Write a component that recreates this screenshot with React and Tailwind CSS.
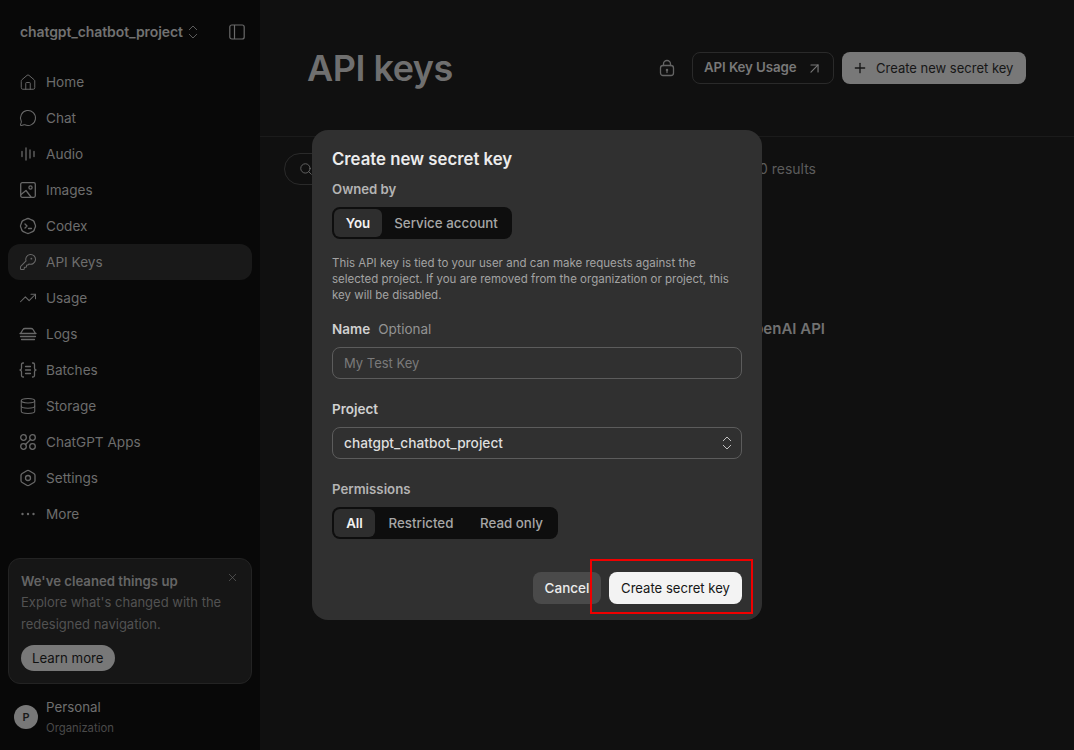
import { ArrowUpRight, ChevronsUpDown, Database, House, KeyRound, MessageCircle, Plus, Search, TrendingUp, X } from 'lucide-react';

const font = { fontFamily: 'Inter, "Liberation Sans", sans-serif' };

const Svg = ({ children }) => (
  <svg width="18" height="18" viewBox="0 0 18 18" fill="none" stroke="currentColor" strokeWidth="1.3" strokeLinecap="round" strokeLinejoin="round">
    {children}
  </svg>
);

const AudioIcon = () => (
  <Svg>
    <path d="M3 6.500v5M7 3v12M11 5v8M15 6.500v5" />
  </Svg>
);

const ImagesIcon = () => (
  <Svg>
    <rect x="1.700" y="1.700" width="14.600" height="14.600" rx="1.500" />
    <circle cx="11.500" cy="6.500" r="1.600" />
    <path d="M2 13.500 7 9.500l5 6.500" />
  </Svg>
);

const CodexIcon = () => (
  <Svg>
    <path d="M9 1.500c1.500 0 2.300 1 3.500 1.300 1.700.4 2.800 1.400 3 3 .2 1.200 1 2 1 3.200s-.8 2-1 3.200c-.2 1.600-1.300 2.600-3 3-1.200.3-2 1.300-3.500 1.300s-2.300-1-3.500-1.300c-1.700-.4-2.800-1.400-3-3C2.300 11 1.500 10.200 1.500 9s.8-2 1-3.200c.2-1.600 1.300-2.600 3-3C6.700 2.500 7.500 1.500 9 1.500Z" />
    <path d="m6 7 2 2-2 2M9.500 11.500h3" />
  </Svg>
);

const LogsIcon = () => (
  <Svg>
    <path d="M1.500 8.500 4 4.500C4.500 3.700 5 3.500 6 3.500h6c1 0 1.500.2 2 1l2.500 4M1 8.500h16M1.500 11.500h15M2.500 14.500h13" />
  </Svg>
);

const BatchesIcon = () => (
  <Svg>
    <path d="M4.500 2H4C3 2 2.500 2.700 2.500 3.500v3.500c0 1-.7 2-1.500 2 .8 0 1.500 1 1.500 2v3.500c0 .8.500 1.500 1.500 1.500h.5M13.500 2h.5c1 0 1.500.7 1.500 1.500v3.500c0 1 .7 2 1.500 2-.8 0-1.500 1-1.500 2v3.500c0 .8-.5 1.500-1.500 1.500h-.5M6.500 5.500h5M6.500 9h5M6.500 12.500h5" />
  </Svg>
);

const AppsIcon = () => (
  <Svg>
    <circle cx="4.500" cy="4.500" r="2.800" />
    <circle cx="13.500" cy="4.500" r="2.800" />
    <circle cx="4.500" cy="13.500" r="2.800" />
    <circle cx="13.500" cy="13.500" r="2.800" />
    <path d="m11.500 6.500-5 5" />
  </Svg>
);

const SettingsIcon = () => (
  <Svg>
    <path d="M7.800 1.800a2.400 2.400 0 0 1 2.400 0l4.600 2.700a2.400 2.400 0 0 1 1.200 2.100v4.800a2.400 2.400 0 0 1-1.200 2.100l-4.600 2.700a2.400 2.400 0 0 1-2.400 0l-4.600-2.700a2.400 2.400 0 0 1-1.200-2.100V6.600a2.400 2.400 0 0 1 1.200-2.100Z" />
    <circle cx="9" cy="9" r="2.500" />
  </Svg>
);

const MoreIcon = () => (
  <svg width="18" height="18" viewBox="0 0 18 18" fill="currentColor">
    <circle cx="3.500" cy="9" r="1.200" />
    <circle cx="9" cy="9" r="1.200" />
    <circle cx="14.500" cy="9" r="1.200" />
  </svg>
);

const LockIcon = () => (
  <svg width="16" height="18" viewBox="0 0 16 18" fill="none" stroke="currentColor" strokeWidth="1.3" strokeLinecap="round">
    <rect x="1.500" y="6.500" width="13" height="10" rx="2.500" />
    <path d="M4.500 6.500V5a3.500 3.500 0 0 1 7 0v1.500M8 11v2.500" />
    <circle cx="8" cy="11" r=".6" fill="currentColor" />
  </svg>
);

const navItems = [
  { label: 'Home', icon: <House size={21} strokeWidth={1.3} /> },
  { label: 'Chat', icon: <MessageCircle size={20} strokeWidth={1.4} /> },
  { label: 'Audio', icon: <AudioIcon /> },
  { label: 'Images', icon: <ImagesIcon /> },
  { label: 'Codex', icon: <CodexIcon /> },
  { label: 'API Keys', icon: <KeyRound size={20} strokeWidth={1.4} />, active: true },
  { label: 'Usage', icon: <TrendingUp size={20} strokeWidth={1.4} /> },
  { label: 'Logs', icon: <LogsIcon /> },
  { label: 'Batches', icon: <BatchesIcon /> },
  { label: 'Storage', icon: <Database size={20} strokeWidth={1.4} /> },
  { label: 'ChatGPT Apps', icon: <AppsIcon /> },
  { label: 'Settings', icon: <SettingsIcon /> },
  { label: 'More', icon: <MoreIcon /> },
];

function Sidebar() {
  return (
    <aside className="w-[260px] shrink-0 h-full bg-[#080808] flex flex-col px-2">
      <div className="h-16 flex items-center pl-3 pr-[7px] shrink-0">
        <span className="text-[14px] pb-[1px] font-semibold text-[#717171] tracking-[-0.1px]">chatgpt_chatbot_project</span>
        <ChevronsUpDown size={18} strokeWidth={1.3} className="text-[#5e5e5e] ml-[1px]" />
        <svg className="ml-auto text-[#6a6a6a]" width="16" height="16" viewBox="0 0 16 16" fill="none" stroke="currentColor" strokeWidth="1.2">
          <rect x=".8" y="1" width="14.400" height="14" rx="2" />
          <path d="M5.500 1v14" />
        </svg>
      </div>
      <nav className="flex flex-col">
        {navItems.map((item) => (
          <div key={item.label} className={`h-9 flex items-center pl-[11px] gap-[9px] rounded-xl text-[13.600px] text-[#6d6d6d] ${item.active ? 'bg-[#191919]' : ''}`}>
            <span className="w-[18px] h-[18px] flex items-center justify-center text-[#686868]">{item.icon}</span>
            <span>{item.label}</span>
          </div>
        ))}
      </nav>
      <div className="mt-auto relative h-[126px] shrink-0 rounded-xl border border-[#232323] bg-[#161616] pt-[12px] pl-3 pr-3">
        <X size={13} strokeWidth={1.2} className="absolute top-[12px] right-[12px] text-[#666666]" />
        <div className="text-[13.200px] leading-[20px] font-semibold text-[#656565]">We've cleaned things up</div>
        <div className="text-[13px] leading-[22px] text-[#525252]">Explore what's changed with the redesigned navigation.</div>
        <div className="mt-[10px] inline-flex h-[26px] pt-[1px] px-[11px] items-center rounded-full bg-[#787878] text-[13.250px] text-[#111111]">Learn more</div>
      </div>
      <div className="h-[66px] shrink-0 pl-[6px] pt-[11px] flex gap-2">
        <div className="w-6 h-6 mt-[10px] rounded-full bg-[#787878] flex items-center justify-center text-[11px] font-semibold text-[#1a1a1a]">P</div>
        <div>
          <div className="text-[13.300px] leading-[24px] text-[#6f6f6f]">Personal</div>
          <div className="text-[11.300px] leading-[16px] text-[#4a4a4a] mt-[1px]">Organization</div>
        </div>
      </div>
    </aside>
  );
}

function MainContent() {
  return (
    <main className="flex-1 h-full bg-[#101010]">
      <header className="h-[137px] border-b border-[#1b1b1b] pl-[47px] pr-12 flex items-start">
        <h1 className="text-[36px] leading-[44px] mt-[46px] font-semibold text-[#6f6f6f] tracking-[-0.5px]">API keys</h1>
        <div className="ml-auto mt-[52px] flex items-center">
          <span className="text-[#646464] flex mr-[17px]"><LockIcon /></span>
          <div className="h-8 w-[142px] flex items-center justify-between pl-[11px] pr-[10px] rounded-lg border border-[#2a2a2a] text-[13.300px] font-semibold text-[#787878] tracking-[-0.1px]">
            <span className="pb-[1px]">API Key Usage</span>
            <ArrowUpRight size={17} strokeWidth={1.6} />
          </div>
          <div className="ml-2 h-8 w-[184px] flex items-center pl-[10px] rounded-lg bg-[#787878] text-[13px] text-[#161616]">
            <Plus size={16} strokeWidth={2} className="mr-2" />
            <span className="pt-[1px]">Create new secret key</span>
          </div>
        </div>
      </header>
      <div className="h-[64px] flex items-center pl-6 pr-[258px] justify-between">
        <div className="w-[120px] h-8 rounded-full border border-[#2a2a2a] flex items-center pl-[14px] text-[#6a6a6a]">
          <Search size={14} strokeWidth={1.5} />
        </div>
        <span className="text-[14px] pb-[2px] text-[#5c5c5c]">0 results</span>
      </div>
      <div className="mt-[113px] pr-[249px] text-right text-[15px] leading-[30px] font-semibold text-[#717171]">Get started with the OpenAI API</div>
    </main>
  );
}

function Segments({ options, widths }) {
  return (
    <div className="inline-flex h-8 p-[2px] rounded-lg bg-[#0e0e0e]">
      {options.map((opt, i) => (
        <div key={opt} className={`h-7 pt-[1px] flex items-center justify-center rounded-md text-[13.350px] ${i === 0 ? 'bg-[#2e2e2e] text-[#f2f2f2] font-semibold' : 'font-medium text-[#a6a6a6]'}`} style={{ width: widths[i] }}>
          {opt}
        </div>
      ))}
    </div>
  );
}

function Modal() {
  return (
    <div className="absolute left-[312px] top-[130px] w-[450px] h-[490px] rounded-2xl bg-[#303030] px-5 pt-[17px]">
      <h2 className="text-[16.750px] leading-[24px] font-semibold text-[#ececec]">Create new secret key</h2>
      <div className="mt-2 text-[13.200px] leading-[20px] font-semibold text-[#b4b4b4]">Owned by</div>
      <div className="mt-2 flex">
        <Segments options={['You', 'Service account']} widths={[48, 128]} />
      </div>
      <p className="mt-[16px] text-[11.500px] leading-[16px] text-[#a3a3a3]">
        This API key is tied to your user and can make requests against the selected project. If you are removed from the organization or project, this key will be disabled.
      </p>
      <div className="mt-[16px] text-[13.500px] leading-[20px]">
        <span className="font-semibold text-[#d0d0d0]">Name</span>
        <span className="ml-2 text-[#939393]">Optional</span>
      </div>
      <div className="mt-2 h-8 pt-[1px] rounded-lg border border-[#5c5c5c] flex items-center pl-[11px] text-[13px] text-[#7a7a7a]">My Test Key</div>
      <div className="mt-[20px] text-[13.500px] leading-[20px] font-semibold text-[#d0d0d0]">Project</div>
      <div className="mt-2 h-8 rounded-lg border border-[#5c5c5c] flex items-center justify-between pl-[11px] pr-[5px] text-[13.700px] font-medium text-[#dedede]">
        chatgpt_chatbot_project
        <ChevronsUpDown size={18} strokeWidth={1.3} className="text-[#c4c4c4]" />
      </div>
      <div className="mt-[20px] text-[13.250px] leading-[20px] font-semibold text-[#b4b4b4]">Permissions</div>
      <div className="mt-2 flex">
        <Segments options={['All', 'Restricted', 'Read only']} widths={[41, 92, 89]} />
      </div>
      <div className="absolute right-5 bottom-4 flex gap-2">
        <div className="h-8 w-[68px] flex items-center justify-center rounded-lg bg-[#4a4a4a] text-[13.500px] font-medium text-[#ececec]">Cancel</div>
        <div className="h-8 w-[133px] pt-[1px] flex items-center justify-center rounded-lg bg-[#f3f3f3] text-[13.100px] text-[#161616]">Create secret key</div>
      </div>
    </div>
  );
}

export default function App() {
  return (
    <div className="relative flex h-[750px] w-[1074px] overflow-hidden" style={font}>
      <Sidebar />
      <MainContent />
      <Modal />
      {/* annotation box drawn on the screenshot */}
      <div className="absolute left-[590px] top-[559px] w-[163px] h-[55px] border-2 border-[#f00000]" />
    </div>
  );
}
